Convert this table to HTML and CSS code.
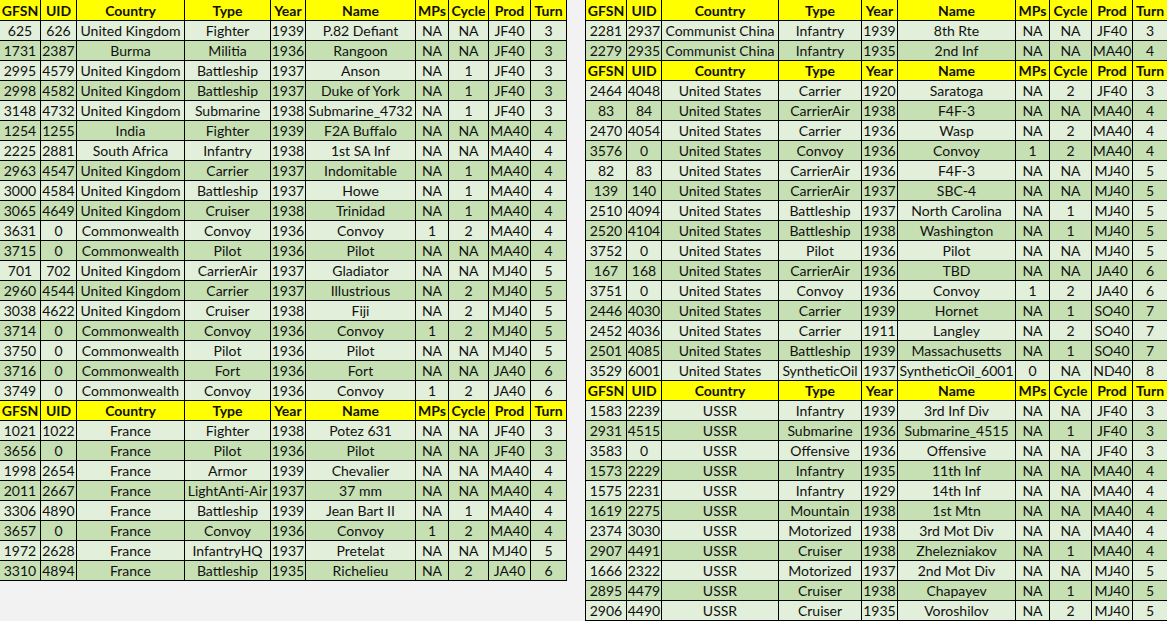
FILE: index.html
```html
<!DOCTYPE html>
<html lang="en">
<head>
<meta charset="utf-8">
<title>Production Schedule</title>
<link rel="stylesheet" href="styles.css">
</head>
<body>
<div class="sheet">
  <table class="grid grid-left">
    <colgroup>
      <col class="c-gfsn"><col class="c-uid"><col class="c-country"><col class="c-type"><col class="c-year"><col class="c-name"><col class="c-mps"><col class="c-cycle"><col class="c-prod"><col class="c-turn">
    </colgroup>
    <tbody>
      <tr class="hd hd-first"><th>GFSN</th><th>UID</th><th>Country</th><th>Type</th><th>Year</th><th>Name</th><th>MPs</th><th>Cycle</th><th>Prod</th><th>Turn</th></tr>
      <tr><td>625</td><td>626</td><td>United Kingdom</td><td>Fighter</td><td>1939</td><td>P.82 Defiant</td><td>NA</td><td>NA</td><td>JF40</td><td>3</td></tr>
      <tr><td>1731</td><td>2387</td><td>Burma</td><td>Militia</td><td>1936</td><td>Rangoon</td><td>NA</td><td>NA</td><td>JF40</td><td>3</td></tr>
      <tr><td>2995</td><td>4579</td><td>United Kingdom</td><td>Battleship</td><td>1937</td><td>Anson</td><td>NA</td><td>1</td><td>JF40</td><td>3</td></tr>
      <tr><td>2998</td><td>4582</td><td>United Kingdom</td><td>Battleship</td><td>1937</td><td>Duke of York</td><td>NA</td><td>1</td><td>JF40</td><td>3</td></tr>
      <tr><td>3148</td><td>4732</td><td>United Kingdom</td><td>Submarine</td><td>1938</td><td>Submarine_4732</td><td>NA</td><td>1</td><td>JF40</td><td>3</td></tr>
      <tr><td>1254</td><td>1255</td><td>India</td><td>Fighter</td><td>1939</td><td>F2A Buffalo</td><td>NA</td><td>NA</td><td>MA40</td><td>4</td></tr>
      <tr><td>2225</td><td>2881</td><td>South Africa</td><td>Infantry</td><td>1938</td><td>1st SA Inf</td><td>NA</td><td>NA</td><td>MA40</td><td>4</td></tr>
      <tr><td>2963</td><td>4547</td><td>United Kingdom</td><td>Carrier</td><td>1937</td><td>Indomitable</td><td>NA</td><td>1</td><td>MA40</td><td>4</td></tr>
      <tr><td>3000</td><td>4584</td><td>United Kingdom</td><td>Battleship</td><td>1937</td><td>Howe</td><td>NA</td><td>1</td><td>MA40</td><td>4</td></tr>
      <tr><td>3065</td><td>4649</td><td>United Kingdom</td><td>Cruiser</td><td>1938</td><td>Trinidad</td><td>NA</td><td>1</td><td>MA40</td><td>4</td></tr>
      <tr><td>3631</td><td>0</td><td>Commonwealth</td><td>Convoy</td><td>1936</td><td>Convoy</td><td>1</td><td>2</td><td>MA40</td><td>4</td></tr>
      <tr><td>3715</td><td>0</td><td>Commonwealth</td><td>Pilot</td><td>1936</td><td>Pilot</td><td>NA</td><td>NA</td><td>MA40</td><td>4</td></tr>
      <tr><td>701</td><td>702</td><td>United Kingdom</td><td>CarrierAir</td><td>1937</td><td>Gladiator</td><td>NA</td><td>NA</td><td>MJ40</td><td>5</td></tr>
      <tr><td>2960</td><td>4544</td><td>United Kingdom</td><td>Carrier</td><td>1937</td><td>Illustrious</td><td>NA</td><td>2</td><td>MJ40</td><td>5</td></tr>
      <tr><td>3038</td><td>4622</td><td>United Kingdom</td><td>Cruiser</td><td>1938</td><td>Fiji</td><td>NA</td><td>2</td><td>MJ40</td><td>5</td></tr>
      <tr><td>3714</td><td>0</td><td>Commonwealth</td><td>Convoy</td><td>1936</td><td>Convoy</td><td>1</td><td>2</td><td>MJ40</td><td>5</td></tr>
      <tr><td>3750</td><td>0</td><td>Commonwealth</td><td>Pilot</td><td>1936</td><td>Pilot</td><td>NA</td><td>NA</td><td>MJ40</td><td>5</td></tr>
      <tr><td>3716</td><td>0</td><td>Commonwealth</td><td>Fort</td><td>1936</td><td>Fort</td><td>NA</td><td>NA</td><td>JA40</td><td>6</td></tr>
      <tr><td>3749</td><td>0</td><td>Commonwealth</td><td>Convoy</td><td>1936</td><td>Convoy</td><td>1</td><td>2</td><td>JA40</td><td>6</td></tr>
    </tbody>
    <tbody>
      <tr class="hd"><th>GFSN</th><th>UID</th><th>Country</th><th>Type</th><th>Year</th><th>Name</th><th>MPs</th><th>Cycle</th><th>Prod</th><th>Turn</th></tr>
      <tr><td>1021</td><td>1022</td><td>France</td><td>Fighter</td><td>1938</td><td>Potez 631</td><td>NA</td><td>NA</td><td>JF40</td><td>3</td></tr>
      <tr><td>3656</td><td>0</td><td>France</td><td>Pilot</td><td>1936</td><td>Pilot</td><td>NA</td><td>NA</td><td>JF40</td><td>3</td></tr>
      <tr><td>1998</td><td>2654</td><td>France</td><td>Armor</td><td>1939</td><td>Chevalier</td><td>NA</td><td>NA</td><td>MA40</td><td>4</td></tr>
      <tr><td>2011</td><td>2667</td><td>France</td><td>LightAnti-Air</td><td>1937</td><td>37 mm</td><td>NA</td><td>NA</td><td>MA40</td><td>4</td></tr>
      <tr><td>3306</td><td>4890</td><td>France</td><td>Battleship</td><td>1939</td><td>Jean Bart II</td><td>NA</td><td>1</td><td>MA40</td><td>4</td></tr>
      <tr><td>3657</td><td>0</td><td>France</td><td>Convoy</td><td>1936</td><td>Convoy</td><td>1</td><td>2</td><td>MA40</td><td>4</td></tr>
      <tr><td>1972</td><td>2628</td><td>France</td><td>InfantryHQ</td><td>1937</td><td>Pretelat</td><td>NA</td><td>NA</td><td>MJ40</td><td>5</td></tr>
      <tr><td>3310</td><td>4894</td><td>France</td><td>Battleship</td><td>1935</td><td>Richelieu</td><td>NA</td><td>2</td><td>JA40</td><td>6</td></tr>
    </tbody>
  </table>

  <table class="grid grid-right">
    <colgroup>
      <col class="r-gfsn"><col class="r-uid"><col class="r-country"><col class="r-type"><col class="r-year"><col class="r-name"><col class="r-mps"><col class="r-cycle"><col class="r-prod"><col class="r-turn">
    </colgroup>
    <tbody>
      <tr class="hd hd-first"><th>GFSN</th><th>UID</th><th>Country</th><th>Type</th><th>Year</th><th>Name</th><th>MPs</th><th>Cycle</th><th>Prod</th><th>Turn</th></tr>
      <tr><td>2281</td><td>2937</td><td>Communist China</td><td>Infantry</td><td>1939</td><td>8th Rte</td><td>NA</td><td>NA</td><td>JF40</td><td>3</td></tr>
      <tr><td>2279</td><td>2935</td><td>Communist China</td><td>Infantry</td><td>1935</td><td>2nd Inf</td><td>NA</td><td>NA</td><td>MA40</td><td>4</td></tr>
    </tbody>
    <tbody>
      <tr class="hd"><th>GFSN</th><th>UID</th><th>Country</th><th>Type</th><th>Year</th><th>Name</th><th>MPs</th><th>Cycle</th><th>Prod</th><th>Turn</th></tr>
      <tr><td>2464</td><td>4048</td><td>United States</td><td>Carrier</td><td>1920</td><td>Saratoga</td><td>NA</td><td>2</td><td>JF40</td><td>3</td></tr>
      <tr><td>83</td><td>84</td><td>United States</td><td>CarrierAir</td><td>1938</td><td>F4F-3</td><td>NA</td><td>NA</td><td>MA40</td><td>4</td></tr>
      <tr><td>2470</td><td>4054</td><td>United States</td><td>Carrier</td><td>1936</td><td>Wasp</td><td>NA</td><td>2</td><td>MA40</td><td>4</td></tr>
      <tr><td>3576</td><td>0</td><td>United States</td><td>Convoy</td><td>1936</td><td>Convoy</td><td>1</td><td>2</td><td>MA40</td><td>4</td></tr>
      <tr><td>82</td><td>83</td><td>United States</td><td>CarrierAir</td><td>1936</td><td>F4F-3</td><td>NA</td><td>NA</td><td>MJ40</td><td>5</td></tr>
      <tr><td>139</td><td>140</td><td>United States</td><td>CarrierAir</td><td>1937</td><td>SBC-4</td><td>NA</td><td>NA</td><td>MJ40</td><td>5</td></tr>
      <tr><td>2510</td><td>4094</td><td>United States</td><td>Battleship</td><td>1937</td><td>North Carolina</td><td>NA</td><td>1</td><td>MJ40</td><td>5</td></tr>
      <tr><td>2520</td><td>4104</td><td>United States</td><td>Battleship</td><td>1938</td><td>Washington</td><td>NA</td><td>1</td><td>MJ40</td><td>5</td></tr>
      <tr><td>3752</td><td>0</td><td>United States</td><td>Pilot</td><td>1936</td><td>Pilot</td><td>NA</td><td>NA</td><td>MJ40</td><td>5</td></tr>
      <tr><td>167</td><td>168</td><td>United States</td><td>CarrierAir</td><td>1936</td><td>TBD</td><td>NA</td><td>NA</td><td>JA40</td><td>6</td></tr>
      <tr><td>3751</td><td>0</td><td>United States</td><td>Convoy</td><td>1936</td><td>Convoy</td><td>1</td><td>2</td><td>JA40</td><td>6</td></tr>
      <tr><td>2446</td><td>4030</td><td>United States</td><td>Carrier</td><td>1939</td><td>Hornet</td><td>NA</td><td>1</td><td>SO40</td><td>7</td></tr>
      <tr><td>2452</td><td>4036</td><td>United States</td><td>Carrier</td><td>1911</td><td>Langley</td><td>NA</td><td>2</td><td>SO40</td><td>7</td></tr>
      <tr><td>2501</td><td>4085</td><td>United States</td><td>Battleship</td><td>1939</td><td>Massachusetts</td><td>NA</td><td>1</td><td>SO40</td><td>7</td></tr>
      <tr><td>3529</td><td>6001</td><td>United States</td><td>SyntheticOil</td><td>1937</td><td>SyntheticOil_6001</td><td>0</td><td>NA</td><td>ND40</td><td>8</td></tr>
    </tbody>
    <tbody>
      <tr class="hd"><th>GFSN</th><th>UID</th><th>Country</th><th>Type</th><th>Year</th><th>Name</th><th>MPs</th><th>Cycle</th><th>Prod</th><th>Turn</th></tr>
      <tr><td>1583</td><td>2239</td><td>USSR</td><td>Infantry</td><td>1939</td><td>3rd Inf Div</td><td>NA</td><td>NA</td><td>JF40</td><td>3</td></tr>
      <tr><td>2931</td><td>4515</td><td>USSR</td><td>Submarine</td><td>1936</td><td>Submarine_4515</td><td>NA</td><td>1</td><td>JF40</td><td>3</td></tr>
      <tr><td>3583</td><td>0</td><td>USSR</td><td>Offensive</td><td>1936</td><td>Offensive</td><td>NA</td><td>NA</td><td>JF40</td><td>3</td></tr>
      <tr><td>1573</td><td>2229</td><td>USSR</td><td>Infantry</td><td>1935</td><td>11th Inf</td><td>NA</td><td>NA</td><td>MA40</td><td>4</td></tr>
      <tr><td>1575</td><td>2231</td><td>USSR</td><td>Infantry</td><td>1929</td><td>14th Inf</td><td>NA</td><td>NA</td><td>MA40</td><td>4</td></tr>
      <tr><td>1619</td><td>2275</td><td>USSR</td><td>Mountain</td><td>1938</td><td>1st Mtn</td><td>NA</td><td>NA</td><td>MA40</td><td>4</td></tr>
      <tr><td>2374</td><td>3030</td><td>USSR</td><td>Motorized</td><td>1938</td><td>3rd Mot Div</td><td>NA</td><td>NA</td><td>MA40</td><td>4</td></tr>
      <tr><td>2907</td><td>4491</td><td>USSR</td><td>Cruiser</td><td>1938</td><td>Zhelezniakov</td><td>NA</td><td>1</td><td>MA40</td><td>4</td></tr>
      <tr><td>1666</td><td>2322</td><td>USSR</td><td>Motorized</td><td>1937</td><td>2nd Mot Div</td><td>NA</td><td>NA</td><td>MJ40</td><td>5</td></tr>
      <tr><td>2895</td><td>4479</td><td>USSR</td><td>Cruiser</td><td>1938</td><td>Chapayev</td><td>NA</td><td>1</td><td>MJ40</td><td>5</td></tr>
      <tr><td>2906</td><td>4490</td><td>USSR</td><td>Cruiser</td><td>1935</td><td>Voroshilov</td><td>NA</td><td>2</td><td>MJ40</td><td>5</td></tr>
    </tbody>
  </table>
</div>
</body>
</html>
```

FILE: styles.css
```css
html, body {
  margin: 0;
  padding: 0;
  background: #f2f2f2;
  overflow: hidden;
}

.sheet {
  display: flex;
  align-items: flex-start;
  gap: 18px;
  width: 1180px;
}

.grid {
  border-collapse: separate;
  border-spacing: 0;
  table-layout: fixed;
  font-family: Lato, "Liberation Sans", sans-serif;
  font-size: 14px;
  color: #111;
  flex: none;
}

.grid th,
.grid td {
  padding: 0;
  line-height: 19px;
  text-align: center;
  white-space: nowrap;
  overflow: hidden;
  border-right: 1px solid #000;
  border-bottom: 1px solid #000;
  box-sizing: border-box;
}

.grid tr.hd th {
  background: #ffff00;
  font-weight: 700;
  color: #111;
  padding-top: 1px;
  line-height: 18px;
}

.grid tr.hd-first th {
  line-height: 19px;
}

.grid tr:nth-child(even) td { background: #e2efda; }
.grid tr:nth-child(odd) td { background: #c6e0b4; }

.grid-left { width: 567px; }
.c-gfsn { width: 41px; }
.c-uid { width: 36px; }
.c-country { width: 108px; }
.c-type { width: 86px; }
.c-year { width: 35px; }
.c-name { width: 110px; }
.c-mps { width: 33px; }
.c-cycle { width: 40px; }
.c-prod { width: 42px; }
.c-turn { width: 36px; }

.grid-right {
  width: 583px;
  border-left: 1px solid #000;
}
.r-gfsn { width: 41px; }
.r-uid { width: 35px; }
.r-country { width: 117px; }
.r-type { width: 83px; }
.r-year { width: 36px; }
.r-name { width: 118px; }
.r-mps { width: 34px; }
.r-cycle { width: 42px; }
.r-prod { width: 41px; }
.r-turn { width: 35px; }
```
